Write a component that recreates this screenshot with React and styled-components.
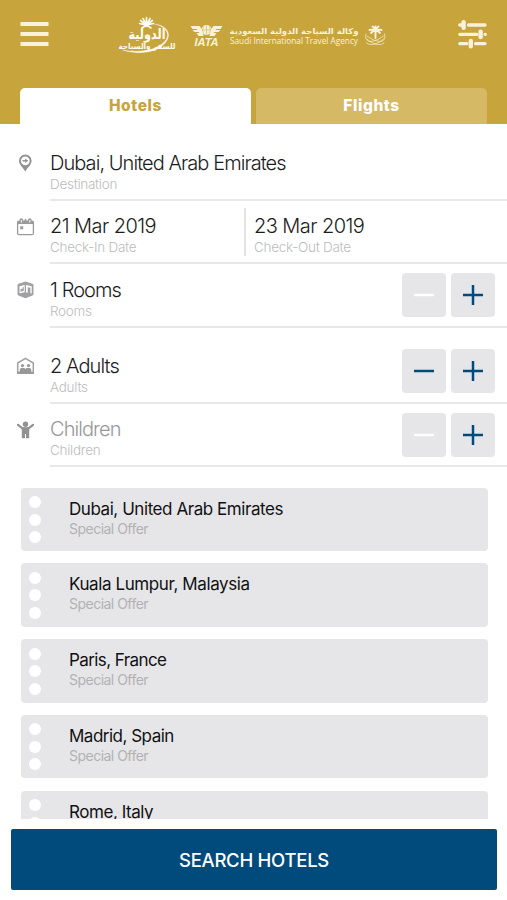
import React, { Component } from 'react';
import styled, { createGlobalStyle } from 'styled-components';

const gold = '#c8a43c';
const navy = '#004b7c';
const gray = '#e6e6e8';
const cream = '#f8f2dc';

const GlobalStyle = createGlobalStyle`
  * {
    box-sizing: border-box;
  }
  body {
    margin: 0;
    background: white;
    font-family: Inter, "Liberation Sans", sans-serif;
  }
  button {
    font-family: inherit;
    border: none;
    padding: 0;
    cursor: pointer;
  }
`;

const Screen = styled.div`
  width: 507px;
  height: 900px;
  overflow: hidden;
  display: flex;
  flex-direction: column;
`;

const Header = styled.header`
  flex: none;
  height: 124px;
  padding: 10px 20px 0;
  background: ${gold};
  display: flex;
  flex-direction: column;
  justify-content: space-between;
`;

const TopBar = styled.div`
  display: flex;
  justify-content: space-between;
  height: 50px;
`;

const IconButton = styled.button`
  width: 29px;
  height: 50px;
  background: none;
`;

const Tabs = styled.div`
  display: flex;
  gap: 5px;
  height: 36.5px;
`;

const Tab = styled.button`
  flex: 1;
  border-radius: 5px 5px 0 0;
  background: ${props => (props.$active ? 'white' : '#d5b964')};
  color: ${props => (props.$active ? gold : 'white')};
  font-size: 15.5px;
  font-weight: 800;
  letter-spacing: 0.6px;
`;

const Form = styled.div`
  flex: none;
  padding-top: 13px;
`;

const Row = styled.div`
  display: flex;
  height: 63.5px;
  margin-top: ${props => (props.$spaced ? '12.5px' : '0')};
`;

const IconCell = styled.div`
  width: 50px;
  padding: 17px 0 0 16px;
  svg {
    display: block;
  }
`;

const Fields = styled.div`
  flex: 1;
  display: flex;
  border-bottom: 2px solid #e8e8e9;
`;

const Field = styled.div`
  flex: ${props => props.$width ? `0 0 ${props.$width}px` : '1'};
  padding-top: 12.75px;
`;

const Divider = styled.div`
  width: 2px;
  height: 48px;
  margin: 7px 8px 0 0;
  background: #e3e3e4;
`;

const Value = styled.div`
  font-size: 20px;
  line-height: 26px;
  font-weight: 300;
  letter-spacing: ${props => (props.$date ? '-0.55px' : '-0.93px')};
  color: ${props => (props.$muted ? '#98989a' : '#1c1c1e')};
  white-space: nowrap;
`;

const Label = styled.div`
  font-size: 13.5px;
  line-height: 16px;
  font-weight: 300;
  letter-spacing: -0.28px;
  color: #bcbcbe;
  white-space: nowrap;
`;

const Stepper = styled.div`
  display: flex;
  gap: 5px;
  padding: 9px 12px 0 0;
`;

const StepButton = styled.button`
  width: 44px;
  height: 44px;
  border-radius: 4px;
  background: ${gray};
  color: ${props => (props.disabled ? 'white' : navy)};
  svg {
    display: block;
    margin: auto;
  }
`;

const Offers = styled.div`
  flex: none;
  height: 331.5px;
  margin-top: 20.5px;
  padding: 0 19.5px 0 20.5px;
  overflow: hidden;
`;

const Offer = styled.div`
  display: flex;
  height: 63.5px;
  margin-bottom: 12.25px;
  border-radius: 4px;
  background: ${gray};
`;

const Dots = styled.div`
  width: 48.5px;
  padding: 8.5px 0 0 8.5px;
`;

const Dot = styled.div`
  width: 12px;
  height: 12px;
  margin-bottom: 5.5px;
  border-radius: 50%;
  background: white;
`;

const City = styled.div`
  padding-top: 10px;
  font-size: 17px;
  line-height: 22px;
  letter-spacing: ${props => props.$track};
  color: #111113;
`;

const OfferLabel = styled.div`
  font-size: 14px;
  line-height: 18px;
  letter-spacing: -0.52px;
  color: #b2b2b5;
`;

const SearchButton = styled.button`
  flex: none;
  width: 486px;
  height: 61px;
  margin: 10px 0 0 11px;
  border-radius: 2px;
  background: ${navy};
  color: white;
  font-size: 18.5px;
  font-weight: 500;
  letter-spacing: -0.27px;
`;

const MenuIcon = () => (
  <svg width="29" height="50">
    <path d="M.5 14h28M.5 24h28M.5 34h28" stroke={cream} strokeWidth="4" />
  </svg>
);

const FilterIcon = () => (
  <svg width="29" height="50" fill="none" stroke={cream} strokeLinecap="round">
    <path d="M1.800 15h2M10.500 15h16.500M1.800 24.300h17M27 24.300h.3M1.800 33.600h7M17.500 33.600h9.500" strokeWidth="3.3" />
    <path d="M5.600 12.300v5.400M22.600 21.600v5.400M12.800 30.900v5.400" strokeWidth="4.4" />
  </svg>
);

const Logos = () => (
  <svg width="276" height="50" viewBox="115.500 10 276 50" fill={cream}>
    {/* agency palm */}
    <g stroke="#fffdf5" fill="none" strokeLinecap="round">
      <path d="M146 25V17.500M146 25l-3.500-6.500M146 25l3.500-6.500M146 25l-6-4.500M146 25l6-4.500M146 25l-7-1.500M146 25l7-1.500M146 25l-4.500 3M146 25l4.500 3" strokeWidth="1.600" />
      <path d="M154 24c8 2 13 6 13 11 0 7-9 12-17 14.500-9 2.500-20 2-28 .5 11 3.500 23 3.500 32 0 8-3 14-9 14-15 0-6-6-10-14-11z" fill="#fffdf5" strokeWidth=".3" />
    </g>
    <text x="146.500" y="38.500" textAnchor="middle" textLength="37" lengthAdjust="spacingAndGlyphs" fill="#fffdf5" fontFamily="DejaVu Sans" fontWeight="700" fontSize="14">الدولية</text>
    <text x="146.500" y="48.500" textAnchor="middle" textLength="57" lengthAdjust="spacingAndGlyphs" fill="#fffdf5" fontFamily="DejaVu Sans" fontWeight="700" fontSize="8">للسفر والسياحة</text>

    {/* iata */}
    <path d="M190 26h9l3 4 1 6h-5l-2-3h3l-1-1h-4l-2-2h5l-1-1h-4zM222 26h-9l-3 4-1 6h5l2-3h-3l1-1h4l2-2h-5l1-1h4z" />
    <circle cx="206" cy="30" r="5" />
    <path d="M201.500 30h9M206 25.300v9.400M203 26.500q-1.500 3.500 0 7M209 26.500q1.500 3.500 0 7" fill="none" stroke={gold} strokeWidth=".5" />
    <text x="194" y="45.500" textLength="24" lengthAdjust="spacingAndGlyphs" fontFamily="Liberation Sans" fontWeight="700" fontStyle="italic" fontSize="10">IATA</text>

    <text x="293.500" y="33.500" textAnchor="middle" textLength="129" lengthAdjust="spacingAndGlyphs" fontFamily="DejaVu Sans" fontWeight="700" fontSize="8">وكالة السياحة الدولية السعودية</text>
    <text x="229.500" y="44.300" textLength="128" lengthAdjust="spacingAndGlyphs" fontFamily="Open Sans" fontSize="8.500">Saudi International Travel Agency</text>

    {/* palm and swords */}
    <g fill="none" stroke={cream} strokeLinecap="round">
      <path d="M375 30v8M375 29l-3-2.500M375 29l3-2.500M375 29v-2.500M374 29.500l-5 .5M376 29.500l5 .5M374 30l-3.500 3M376 30l3.500 3" strokeWidth="1.900" />
      <path d="M365.500 34c-1.500 5 1 7.500 5 7.500 5-.5 9-3 12.500-5.500M384 34c1.500 5-1 7.500-5 7.500-5-.5-9-3-12.500-5.500M366 43c4 3.500 12 1 17-4M383.500 43c-4 3.500-12 1-17-4" strokeWidth=".7" />
    </g>
  </svg>
);

const PinIcon = () => (
  <svg width="18" height="18" viewBox="0 0 18 18">
    <path fillRule="evenodd" fill="#929294" d="M9.300.5a6.300 6.300 0 0 0-6.300 6.300c0 4 4.200 7.200 6.300 10.700 2.100-3.500 6.300-6.700 6.300-10.700A6.300 6.300 0 0 0 9.300.5zM9.300 2.400a4.400 4.400 0 1 1 0 8.800 4.400 4.400 0 0 1 0-8.800z" />
    <path d="M6.500 6h2.700V4.500l3 2.300-3 2.300V7.600H6.500z" fill="#929294" />
  </svg>
);

const CalendarIcon = () => (
  <svg width="19" height="18" viewBox="0 0 19 18" fill="none" stroke="#9a9a9c">
    <rect x="1.600" y="3.200" width="15.800" height="13.500" rx="1.500" strokeWidth="1.300" />
    <path d="M1.500 4.600h16" strokeWidth="2.800" />
    <path d="M5.300 2v2.500M13.800 2v2.500" strokeWidth="3.600" strokeLinecap="round" />
    <path d="M9.500 2v2" strokeWidth="2" strokeLinecap="round" />
    <path d="M5.300 2v2.500M13.800 2v2.500" stroke="white" strokeWidth="1" />
    <path d="M4.200 9.800h3" strokeWidth="3" />
  </svg>
);

const RoomsIcon = () => (
  <svg width="19" height="18" viewBox="0 0 19 18">
    <path d="M2.500 2.800 9.500.5l7 2.300q1 .4 1 1.400v9q0 1-1 1.300l-7 2.800-7-2.800q-1-.3-1-1.300v-9q0-1 1-1.400z" fill="#a1a1a3" />
    <path d="M3.500 5.200 8.700 4v7.200l-5.200 1zM10 4l5.700 1.200v7.300l-1.300-.3V6.800l-2.700-.5v5.400L10 11.400z" fill="white" />
    <path d="M4.500 10.800V8l2.300-.5V6l1 0v3.800zM12.700 7.300l.8.200v4.300l-.8-.2z" fill="#a1a1a3" />
  </svg>
);

const AdultsIcon = () => (
  <svg width="19" height="18" viewBox="0 0 19 18">
    <path d="M1.700 16.300V6L9.500 1.300 17.300 6v10.300z" fill="none" stroke="#a1a1a3" strokeWidth="1.500" />
    <circle cx="6.500" cy="8.600" r="1.600" fill="#98989a" />
    <circle cx="12.500" cy="8.600" r="1.600" fill="#98989a" />
    <path d="M3.700 16v-3q0-2 2-2h2q1.300 0 1.800 1 .5-1 1.800-1h2q2 0 2 2v3z" fill="#98989a" />
    <path d="M2 15.800h15" stroke="#98989a" strokeWidth="2.200" />
  </svg>
);

const ChildIcon = () => (
  <svg width="19" height="18" viewBox="0 0 19 18">
    <circle cx="9.500" cy="3.200" r="2.700" fill="#929294" />
    <path d="M2 3.800 6.500 7.300h6L17 3.800" fill="none" stroke="#929294" strokeWidth="2.200" strokeLinecap="round" strokeLinejoin="round" />
    <path d="M5.800 6.500h7.400V17.300h-3.200v-4.300h-1V17.300H5.800z" fill="#929294" />
  </svg>
);

const Counter = ({ empty }) => (
  <Stepper>
    <StepButton disabled={empty}>
      <svg width="20" height="20"><path d="M0 10h20" stroke="currentColor" strokeWidth="2.500" /></svg>
    </StepButton>
    <StepButton>
      <svg width="20" height="20"><path d="M0 10h20M10 0v20" stroke="currentColor" strokeWidth="2.500" /></svg>
    </StepButton>
  </Stepper>
);

const offers = [
  { city: 'Dubai, United Arab Emirates', track: '-0.44px' },
  { city: 'Kuala Lumpur, Malaysia', track: '-0.4px' },
  { city: 'Paris, France', track: '-0.58px' },
  { city: 'Madrid, Spain', track: '-0.5px' },
  { city: 'Rome, Italy', track: '-0.45px' },
];

export default class App extends Component {
  state = { tab: 'Hotels' };

  _handleTab = tab => {
    this.setState({ tab });
  }

  render() {
    return (
      <Screen>
        <GlobalStyle />
        <Header>
          <TopBar>
            <IconButton aria-label="Menu"><MenuIcon /></IconButton>
            <Logos />
            <IconButton aria-label="Filters"><FilterIcon /></IconButton>
          </TopBar>
          <Tabs>
            {['Hotels', 'Flights'].map(tab => (
              <Tab key={tab} $active={this.state.tab === tab} onClick={() => this._handleTab(tab)}>{tab}</Tab>
            ))}
          </Tabs>
        </Header>

        <Form>
          <Row>
            <IconCell><PinIcon /></IconCell>
            <Fields>
              <Field>
                <Value>Dubai, United Arab Emirates</Value>
                <Label>Destination</Label>
              </Field>
            </Fields>
          </Row>
          <Row>
            <IconCell><CalendarIcon /></IconCell>
            <Fields>
              <Field $width={194}>
                <Value $date>21 Mar 2019</Value>
                <Label>Check-In Date</Label>
              </Field>
              <Divider />
              <Field>
                <Value $date>23 Mar 2019</Value>
                <Label>Check-Out Date</Label>
              </Field>
            </Fields>
          </Row>
          <Row>
            <IconCell><RoomsIcon /></IconCell>
            <Fields>
              <Field>
                <Value>1 Rooms</Value>
                <Label>Rooms</Label>
              </Field>
              <Counter empty />
            </Fields>
          </Row>
          <Row $spaced>
            <IconCell><AdultsIcon /></IconCell>
            <Fields>
              <Field>
                <Value>2 Adults</Value>
                <Label>Adults</Label>
              </Field>
              <Counter />
            </Fields>
          </Row>
          <Row>
            <IconCell><ChildIcon /></IconCell>
            <Fields>
              <Field>
                <Value $muted>Children</Value>
                <Label>Children</Label>
              </Field>
              <Counter empty />
            </Fields>
          </Row>
        </Form>

        <Offers>
          {offers.map(offer => (
            <Offer key={offer.city}>
              <Dots><Dot /><Dot /><Dot /></Dots>
              <div>
                <City $track={offer.track}>{offer.city}</City>
                <OfferLabel>Special Offer</OfferLabel>
              </div>
            </Offer>
          ))}
        </Offers>

        <SearchButton>SEARCH HOTELS</SearchButton>
      </Screen>
    );
  }
}
